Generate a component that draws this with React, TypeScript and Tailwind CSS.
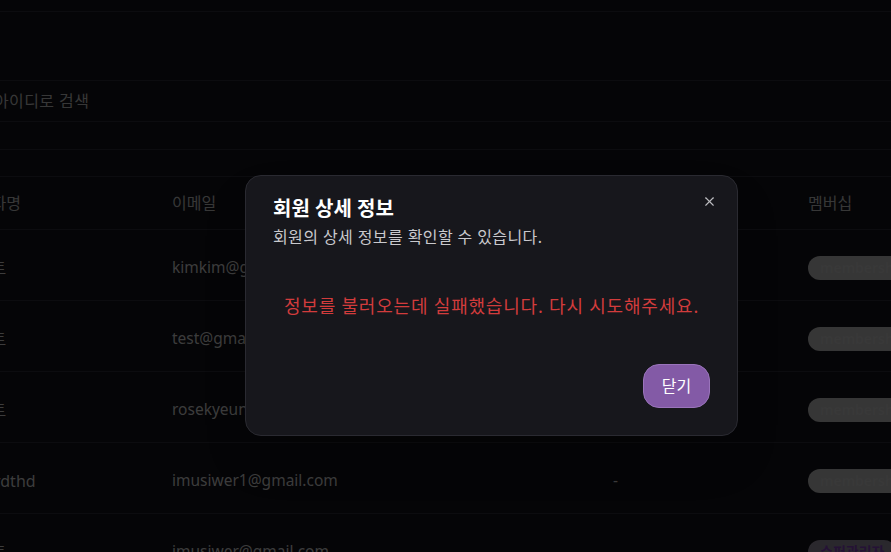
import type { FC } from "react";

const FONT = { fontFamily: '"Noto Sans", "Noto Sans CJK KR", sans-serif' };

interface Member {
	name: string;
	email: string;
	phone: string;
	role: string;
	admin?: boolean;
}

const members: Member[] = [
	{ name: "테스트", email: "kimkim@gmail.com", phone: "-", role: "membership" },
	{ name: "테스트", email: "test@gmail.com", phone: "-", role: "membership" },
	{ name: "테스트", email: "rosekyeun@gmail.com", phone: "-", role: "membership" },
	{ name: "asdfrdthd", email: "imusiwer1@gmail.com", phone: "-", role: "membership" },
	{ name: "테스트", email: "imusiwer@gmail.com", phone: "", role: "슈퍼관리자", admin: true }
];

const XIcon: FC = () => (
	<svg width="15" height="15" viewBox="0 0 24 24" fill="none" stroke="currentColor" strokeWidth="1.8" strokeLinecap="round">
		<path d="M18 6 6 18" />
		<path d="m6 6 12 12" />
	</svg>
);

const Row: FC<{ m: Member }> = ({ m }) => (
	<div className="flex h-[71px] items-center border-b border-[#1f1f26] pt-[5px] text-[15.5px] text-[#979797]">
		<div className="w-[210px] shrink-0 whitespace-nowrap text-[16px]">{m.name}</div>
		<div className="w-[441px] shrink-0 whitespace-nowrap">{m.email}</div>
		<div className="w-[195px] shrink-0">{m.phone}</div>
		<div className="shrink-0">
			<span
				className={
					m.admin
						? "inline-flex h-6 items-center rounded-full bg-[#6a6472] px-3 text-sm font-semibold text-[#5c2e86]"
						: "inline-flex h-6 items-center rounded-full bg-[#878787] px-3 text-sm font-semibold text-[#8e8e8e]"
				}>
				{m.role}
			</span>
		</div>
	</div>
);

const App: FC = () => (
	<div className="relative h-[552px] w-[891px] overflow-hidden bg-[#0d0d12]" style={FONT}>
		<div className="ml-[-38px] w-[1000px]">
			<div className="h-3 border-b border-[#1f1f26]" />
			<div className="h-[68px]" />
			<div className="flex h-[42px] items-center border-y border-[#1f1f26] pl-[32px] text-[16px] tracking-[0.4px] text-[#8a8a8a]">
				아이디로 검색
			</div>
			<div className="h-[28px] border-b border-[#1f1f26]" />
			<div className="h-[27px] border-b border-[#1f1f26]" />
			<div className="flex h-[53px] items-center border-b border-[#1f1f26] text-[16px] text-[#8a8a8a]">
				<div className="w-[210px] shrink-0">사용자명</div>
				<div className="w-[636px] shrink-0">이메일</div>
				<div className="shrink-0">멤버십</div>
			</div>
			{members.map((m, i) => (
				<Row key={i} m={m} />
			))}
		</div>

		<div className="absolute inset-0 bg-black/60" />

		<div className="absolute left-[245px] top-[175px] flex h-[261px] w-[493px] flex-col rounded-2xl border border-[#2a2a31] bg-[#17171c] px-[27px] pt-[19px] pb-[27px] shadow-2xl">
			<button className="absolute right-[20px] top-[18px] text-[#bdbdc2]">
				<XIcon />
			</button>
			<h2 className="text-[20px] font-bold leading-[28px] text-white">회원 상세 정보</h2>
			<p className="mt-[2px] text-[16px] tracking-[0.4px] text-[#c9c9cd]">회원의 상세 정보를 확인할 수 있습니다.</p>
			<div className="flex flex-1 items-center justify-center text-[18px] tracking-[0.8px] text-[#d23c3c]">
				정보를 불러오는데 실패했습니다. 다시 시도해주세요.
			</div>
			<div className="flex justify-end">
				<button className="h-[44px] w-[67px] rounded-2xl border border-[#9a74bb] bg-[#835aa6] text-[16px] text-white">
					닫기
				</button>
			</div>
		</div>
	</div>
);

export default App;
